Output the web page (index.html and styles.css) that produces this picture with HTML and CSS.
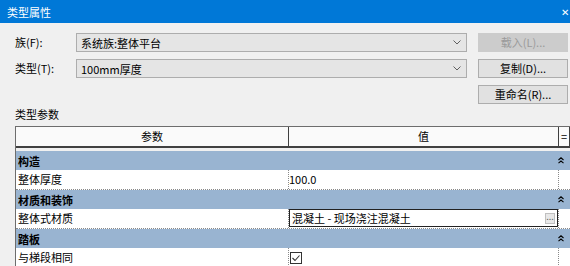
FILE: index.html
```html
<!DOCTYPE html>
<html lang="zh-CN">
<head>
    <meta charset="UTF-8">
    <meta name="viewport" content="width=device-width, initial-scale=1.0">
    <title>类型属性</title>
    <link rel="stylesheet" href="styles.css">
</head>
<body>
    <div class="dialog">
        <div class="titlebar">
            <span>类型属性</span>
            <span class="close">✕</span>
        </div>

        <div class="top">
            <label class="label">族(F):</label>
            <div class="combo">
                <span>系统族:整体平台</span>
                <svg class="arrow" width="8" height="5" viewBox="0 0 8 5"><polyline points="0.5,0.5 4,4 7.5,0.5" fill="none" stroke="#606060" stroke-width="1"/></svg>
            </div>
            <div class="button disabled">载入(L)...</div>

            <label class="label">类型(T):</label>
            <div class="combo">
                <span>100mm厚度</span>
                <svg class="arrow" width="8" height="5" viewBox="0 0 8 5"><polyline points="0.5,0.5 4,4 7.5,0.5" fill="none" stroke="#606060" stroke-width="1"/></svg>
            </div>
            <div class="button">复制(D)...</div>

            <div class="button rename">重命名(R)...</div>
        </div>

        <div class="section-title">类型参数</div>

        <div class="grid">
            <div class="head">
                <div class="cell name">参数</div>
                <div class="cell value">值</div>
                <div class="cell eq">=</div>
            </div>

            <div class="group">
                <span>构造</span>
                <svg class="fold" width="6" height="7" viewBox="0 0 6 7"><polyline points="0.5,3 3,0.8 5.5,3" fill="none" stroke="#000" stroke-width="1.1"/><polyline points="0.5,6.2 3,4 5.5,6.2" fill="none" stroke="#000" stroke-width="1.1"/></svg>
            </div>
            <div class="row">
                <div class="cell name">整体厚度</div>
                <div class="cell value">100.0</div>
                <div class="cell eq"></div>
            </div>

            <div class="group">
                <span>材质和装饰</span>
                <svg class="fold" width="6" height="7" viewBox="0 0 6 7"><polyline points="0.5,3 3,0.8 5.5,3" fill="none" stroke="#000" stroke-width="1.1"/><polyline points="0.5,6.2 3,4 5.5,6.2" fill="none" stroke="#000" stroke-width="1.1"/></svg>
            </div>
            <div class="row">
                <div class="cell name">整体式材质</div>
                <div class="cell value">
                    <div class="editor">
                        <span>混凝土 - 现场浇注混凝土</span>
                        <span class="browse">...</span>
                    </div>
                </div>
                <div class="cell eq"></div>
            </div>

            <div class="group">
                <span>踏板</span>
                <svg class="fold" width="6" height="7" viewBox="0 0 6 7"><polyline points="0.5,3 3,0.8 5.5,3" fill="none" stroke="#000" stroke-width="1.1"/><polyline points="0.5,6.2 3,4 5.5,6.2" fill="none" stroke="#000" stroke-width="1.1"/></svg>
            </div>
            <div class="row">
                <div class="cell name">与梯段相同</div>
                <div class="cell value">
                    <svg class="check" width="12" height="12" viewBox="0 0 12 12"><rect x="0.5" y="0.5" width="11" height="11" fill="#fff" stroke="#333"/><polyline points="2.5,6 5,8.5 9.5,3.5" fill="none" stroke="#333" stroke-width="1.1"/></svg>
                </div>
                <div class="cell eq"></div>
            </div>
        </div>
    </div>
</body>
</html>
```

FILE: styles.css
```css
html {
  box-sizing: border-box;
}

*,
*:before,
*:after {
  box-sizing: inherit;
}

body {
  margin: 0;
  font-family: "Noto Sans CJK SC", "Liberation Sans", sans-serif;
  font-size: 11px;
  color: #000;
  background: #f0f0f0;
}

.dialog {
  width: 570px;
  height: 266px;
  overflow: hidden;
}

.titlebar {
  height: 23px;
  display: flex;
  align-items: center;
  justify-content: space-between;
  padding: 0 1px 0 7px;
  background: #0078d7;
  color: #fff;
  font-size: 11px;
}
.titlebar .close {
  font-size: 10px;
}

.top {
  display: grid;
  grid-template-columns: 50px 391px 90px;
  grid-auto-rows: 19px;
  column-gap: 11px;
  row-gap: 7px;
  margin-top: 10px;
  padding-left: 15px;
  align-items: center;
}

.label {
  line-height: 19px;
}

.combo {
  height: 19px;
  display: flex;
  align-items: center;
  justify-content: space-between;
  padding: 0 5px 0 4px;
  background: #e5e5e5;
  border: 1px solid #adadad;
}

.button {
  height: 19px;
  line-height: 17px;
  text-align: center;
  background: #e1e1e1;
  border: 1px solid #adadad;
}
.button.disabled {
  background: #cccccc;
  border-color: #cccccc;
  color: #9a9a9a;
}
.button.rename {
  grid-column: 3;
}

.section-title {
  margin: 0 0 2px 15px;
  height: 20px;
  line-height: 20px;
}

.grid {
  margin-left: 15px;
  width: 555px;
  border-left: 1px solid #6d6d6d;
}

.head {
  display: flex;
  height: 22px;
  background: #fafafa;
  border-top: 1px solid #6d6d6d;
  border-bottom: 2px solid #404040;
  margin-bottom: 3px;
}
.head .cell {
  text-align: center;
  line-height: 19px;
}
.head .value,
.head .eq {
  border-left: 1px solid #404040;
}
.head .eq {
  border-right: 1px solid #404040;
}

.cell.name {
  width: 272px;
}
.cell.value {
  width: 270px;
}
.cell.eq {
  width: 12px;
}

.group {
  height: 19px;
  display: flex;
  align-items: center;
  justify-content: space-between;
  padding: 0 6px 0 2px;
  background: #99b4d1;
  font-weight: bold;
}

.row {
  display: flex;
  height: 20px;
  background: #fff;
  border-bottom: 1px dotted #8a8a8a;
}
.row .cell {
  line-height: 19px;
  padding-left: 2px;
}
.row .value,
.row .eq {
  border-left: 1px dotted #8a8a8a;
}
.row .value {
  padding-left: 0;
}

.editor {
  height: 18px;
  display: flex;
  align-items: center;
  justify-content: space-between;
  padding: 0 2px 0 2px;
  border: 1px solid #222;
  line-height: 16px;
}
.editor .browse {
  width: 10px;
  height: 11px;
  line-height: 6px;
  font-size: 9px;
  text-align: center;
  color: #666;
  background: #e8e8e8;
  border: 1px solid #c0c0c0;
}

.check {
  display: block;
  margin: 4px 0 0 1px;
}
```
